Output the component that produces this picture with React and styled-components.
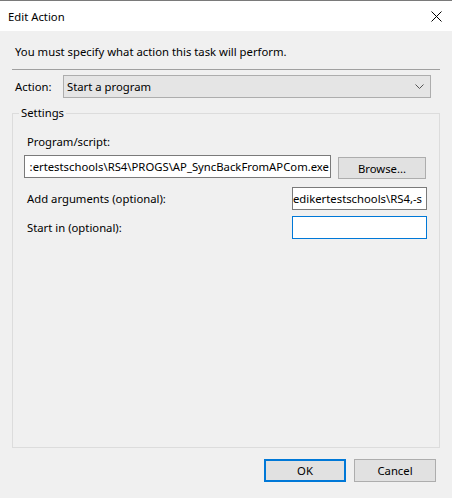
import React from 'react';
import styled, { createGlobalStyle } from 'styled-components';

const GlobalStyle = createGlobalStyle`
	html, body {
		margin: 0;
		padding: 0;
		background: #f0f0f0;
	}
	body {
		font-family: 'Noto Sans', 'Open Sans', sans-serif;
		font-size: 11.3px;
		color: #000;
	}
`;

const Window = styled.div`
	width: 452px;
	height: 498px;
	box-sizing: border-box;
	display: flex;
	flex-direction: column;
	background: #f0f0f0;
	border-top: 1px solid #7a7a7a;
	overflow: hidden;
`;

const TitleBar = styled.div`
	height: 30px;
	flex: none;
	display: flex;
	align-items: center;
	justify-content: space-between;
	padding: 1px 10px 0 8px;
	box-sizing: border-box;
	background: #fff;
	line-height: 16px;
`;

const Content = styled.div`
	flex: 1;
	display: flex;
	flex-direction: column;
	padding: 0 12px;
	min-height: 0;
`;

const Instruction = styled.div`
	margin-top: 13px;
	padding-left: 3px;
	line-height: 16px;
`;

const Separator = styled.div`
	margin-top: 9px;
	height: 1px;
	background: #a0a0a0;
`;

const ActionRow = styled.div`
	margin-top: 5px;
	display: flex;
	align-items: center;
	padding-left: 3px;
`;

const Label = styled.span`
	line-height: 16px;
	padding-left: ${p => p.$indent || 0}px;
	width: ${p => (p.$width ? `${p.$width}px` : 'auto')};
	flex: none;
`;

const Combo = styled.div`
	width: 368px;
	height: 23px;
	box-sizing: border-box;
	display: flex;
	align-items: center;
	justify-content: space-between;
	padding: 0 6px 0 3px;
	background: #e5e5e5;
	border: 1px solid #adadad;
`;

const Group = styled.fieldset`
	flex: 1;
	margin: 7px 0 0;
	padding: 0 6px;
	border: 1px solid #dcdcdc;
	min-width: 0;
	legend {
		padding: 0 2px;
		line-height: 16px;
	}
`;

const GroupBody = styled.div`
	display: flex;
	flex-direction: column;
	padding: 13px 6px 0 5px;
`;

const Row = styled.div`
	display: flex;
	align-items: ${p => p.$align || 'center'};
	justify-content: space-between;
	margin-top: ${p => p.$top || 0}px;
`;

const TextBox = styled.div`
	width: ${p => p.$width}px;
	height: 23px;
	box-sizing: border-box;
	flex: none;
	display: flex;
	align-items: center;
	justify-content: flex-end;
	overflow: hidden;
	white-space: nowrap;
	padding-right: ${p => p.$pad || 1}px;
	background: #fff;
	border: 1px solid ${p => (p.$focused ? '#0078d7' : '#7a7a7a')};
`;

const Button = styled.div`
	width: ${p => p.$width || 82}px;
	height: ${p => p.$height || 23}px;
	box-sizing: border-box;
	flex: none;
	display: flex;
	align-items: center;
	justify-content: center;
	background: #e1e1e1;
	border: ${p => (p.$default ? '2px solid #0078d7' : '1px solid #adadad')};
	margin-top: ${p => p.$top || 0}px;
	margin-right: ${p => p.$right || 0}px;
`;

const Footer = styled.div`
	flex: none;
	display: flex;
	justify-content: flex-end;
	gap: 8px;
	padding: 11px 16px 16px 0;
`;

const CloseIcon = () => (
	<svg width="11" height="11" viewBox="0 0 11 11">
		<path d="M0.5 0.5 L10.5 10.5 M10.5 0.5 L0.5 10.5" stroke="#000" strokeWidth="1" fill="none" />
	</svg>
);

const Chevron = () => (
	<svg width="9" height="5" viewBox="0 0 9 5">
		<path d="M0.5 0.5 L4.5 4.5 L8.5 0.5" stroke="#555" strokeWidth="1" fill="none" />
	</svg>
);

export default function App() {
	return (
		<Window>
			<GlobalStyle />
			<TitleBar>
				<span>Edit Action</span>
				<CloseIcon />
			</TitleBar>
			<Content>
				<Instruction>You must specify what action this task will perform.</Instruction>
				<Separator />
				<ActionRow>
					<Label $width={48}>Action:</Label>
					<Combo>
						<span>Start a program</span>
						<Chevron />
					</Combo>
				</ActionRow>
				<Group>
					<legend>Settings</legend>
					<GroupBody>
						<Label $indent={3}>Program/script:</Label>
						<Row $align="flex-start" $top={5}>
							<TextBox $width={307}>:ertestschools\RS4\PROGS\AP_SyncBackFromAPCom.exe</TextBox>
							<Button $width={88} $height={22} $top={2} $right={1}>
								Browse...
							</Button>
						</Row>
						<Row $top={8}>
							<Label $indent={3}>Add arguments (optional):</Label>
							<TextBox $width={135} $pad={4}>
								edikertestschools\RS4,-s
							</TextBox>
						</Row>
						<Row $top={6}>
							<Label $indent={3}>Start in (optional):</Label>
							<TextBox $width={135} $focused />
						</Row>
					</GroupBody>
				</Group>
			</Content>
			<Footer>
				<Button $default>OK</Button>
				<Button>Cancel</Button>
			</Footer>
		</Window>
	);
}
